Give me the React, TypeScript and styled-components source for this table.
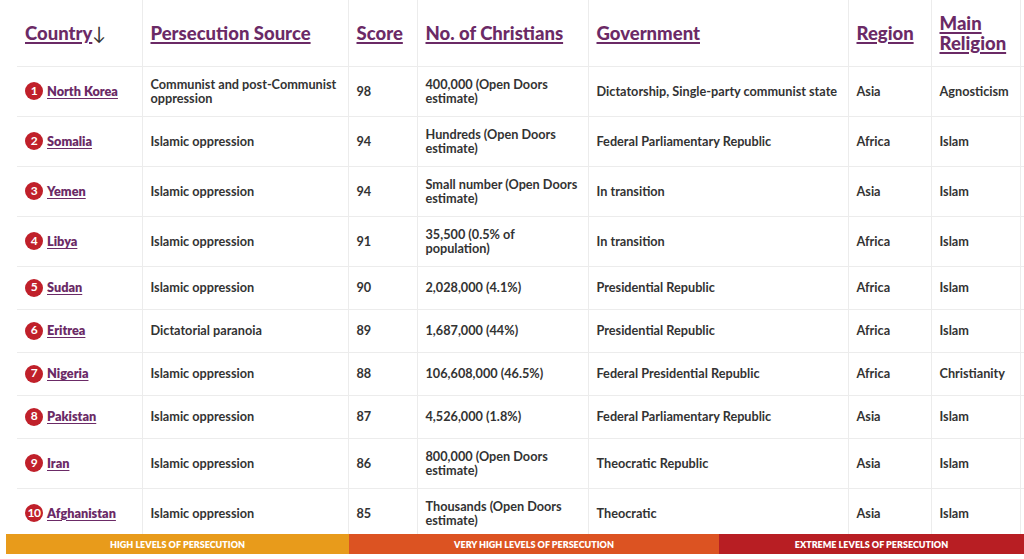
import React from "react";
import styled, { createGlobalStyle } from "styled-components";

const Global = createGlobalStyle`
  html, body { margin: 0; padding: 0; background: #fff; }
  body { font-family: Lato, "Open Sans", Arial, sans-serif; }
`;

const Page = styled.div`
  width: 1024px;
  height: 559px;
  overflow: hidden;
  display: flex;
  flex-direction: column;
  padding-bottom: 5px;
  box-sizing: border-box;
`;

const TableArea = styled.div`
  flex: 1;
  min-height: 0;
  overflow: hidden;
  padding-left: 17px;
`;

const Table = styled.table`
  border-collapse: collapse;
  table-layout: fixed;
  width: 1103px;
`;

const HeadCell = styled.th`
  height: 66px;
  padding: 0 8px;
  text-align: left;
  vertical-align: middle;
  border-right: 1px solid #ececec;
  border-bottom: 1px solid #ececec;
  font-size: 18.5px;
  line-height: 20px;
  font-weight: 900;
  color: #6b2a66;
  box-sizing: border-box;
`;

const HeadLink = styled.a`
  color: #6b2a66;
  text-decoration: underline;
  text-decoration-thickness: 2px;
  text-underline-offset: 2px;
  cursor: pointer;
`;

const SortArrow = styled.span`
  color: #333;
  font-weight: 400;
`;

const Cell = styled.td`
  padding: 10px 8px;
  vertical-align: middle;
  border-right: 1px solid #ececec;
  border-bottom: 1px solid #ececec;
  font-size: 12.7px;
  line-height: 14.5px;
  font-weight: 700;
  color: #333;
  white-space: pre-line;
`;

const CountryWrap = styled.div`
  display: flex;
  align-items: center;
  gap: 4px;
  height: 22px;
`;

const Badge = styled.span`
  display: inline-flex;
  align-items: center;
  justify-content: center;
  width: 18px;
  height: 18px;
  border-radius: 50%;
  background: #c0202a;
  color: #fff;
  font-size: 12px;
  font-weight: 700;
  letter-spacing: -0.5px;
  flex-shrink: 0;
`;

const CountryLink = styled.a`
  color: #6b2a66;
  text-decoration: underline;
  text-underline-offset: 2px;
  font-weight: 800;
  cursor: pointer;
`;

const Legend = styled.div`
  margin-left: 6px;
  height: 20px;
  display: grid;
  grid-template-columns: 343px 370px 1fr;
`;

const LegendBand = styled.div<{ $bg: string }>`
  background: ${(p) => p.$bg};
  color: #fff;
  display: flex;
  align-items: center;
  justify-content: center;
  font-size: 9px;
  font-weight: 800;
  text-transform: uppercase;
`;

type Row = {
  country: string;
  source: string;
  score: string;
  christians: string;
  government: string;
  region: string;
  religion: string;
};

const rows: Row[] = [
  { country: "North Korea", source: "Communist and post-Communist\noppression", score: "98", christians: "400,000 (Open Doors\nestimate)", government: "Dictatorship, Single-party communist state", region: "Asia", religion: "Agnosticism" },
  { country: "Somalia", source: "Islamic oppression", score: "94", christians: "Hundreds (Open Doors\nestimate)", government: "Federal Parliamentary Republic", region: "Africa", religion: "Islam" },
  { country: "Yemen", source: "Islamic oppression", score: "94", christians: "Small number (Open Doors\nestimate)", government: "In transition", region: "Asia", religion: "Islam" },
  { country: "Libya", source: "Islamic oppression", score: "91", christians: "35,500 (0.5% of\npopulation)", government: "In transition", region: "Africa", religion: "Islam" },
  { country: "Sudan", source: "Islamic oppression", score: "90", christians: "2,028,000 (4.1%)", government: "Presidential Republic", region: "Africa", religion: "Islam" },
  { country: "Eritrea", source: "Dictatorial paranoia", score: "89", christians: "1,687,000 (44%)", government: "Presidential Republic", region: "Africa", religion: "Islam" },
  { country: "Nigeria", source: "Islamic oppression", score: "88", christians: "106,608,000 (46.5%)", government: "Federal Presidential Republic", region: "Africa", religion: "Christianity" },
  { country: "Pakistan", source: "Islamic oppression", score: "87", christians: "4,526,000 (1.8%)", government: "Federal Parliamentary Republic", region: "Asia", religion: "Islam" },
  { country: "Iran", source: "Islamic oppression", score: "86", christians: "800,000 (Open Doors\nestimate)", government: "Theocratic Republic", region: "Asia", religion: "Islam" },
  { country: "Afghanistan", source: "Islamic oppression", score: "85", christians: "Thousands (Open Doors\nestimate)", government: "Theocratic", region: "Asia", religion: "Islam" },
];

const widths = [125, 206, 69, 171, 260, 83, 89, 100];

export default function App() {
  return (
    <Page>
      <Global />
      <TableArea>
        <Table>
          <colgroup>
            {widths.map((w, i) => (
              <col key={i} style={{ width: w }} />
            ))}
          </colgroup>
          <thead>
            <tr>
              <HeadCell>
                <HeadLink>Country</HeadLink>
                <SortArrow>↓</SortArrow>
              </HeadCell>
              <HeadCell><HeadLink>Persecution Source</HeadLink></HeadCell>
              <HeadCell><HeadLink>Score</HeadLink></HeadCell>
              <HeadCell><HeadLink>No. of Christians</HeadLink></HeadCell>
              <HeadCell><HeadLink>Government</HeadLink></HeadCell>
              <HeadCell><HeadLink>Region</HeadLink></HeadCell>
              <HeadCell><HeadLink>Main Religion</HeadLink></HeadCell>
              <HeadCell />
            </tr>
          </thead>
          <tbody>
            {rows.map((r, i) => (
              <tr key={r.country}>
                <Cell>
                  <CountryWrap>
                    <Badge>{i + 1}</Badge>
                    <CountryLink>{r.country}</CountryLink>
                  </CountryWrap>
                </Cell>
                <Cell>{r.source}</Cell>
                <Cell>{r.score}</Cell>
                <Cell>{r.christians}</Cell>
                <Cell>{r.government}</Cell>
                <Cell>{r.region}</Cell>
                <Cell>{r.religion}</Cell>
                <Cell />
              </tr>
            ))}
          </tbody>
        </Table>
      </TableArea>
      <Legend>
        <LegendBand $bg="#e89b1b">High levels of persecution</LegendBand>
        <LegendBand $bg="#dc5322">Very high levels of persecution</LegendBand>
        <LegendBand $bg="#b81e23">Extreme levels of persecution</LegendBand>
      </Legend>
    </Page>
  );
}
